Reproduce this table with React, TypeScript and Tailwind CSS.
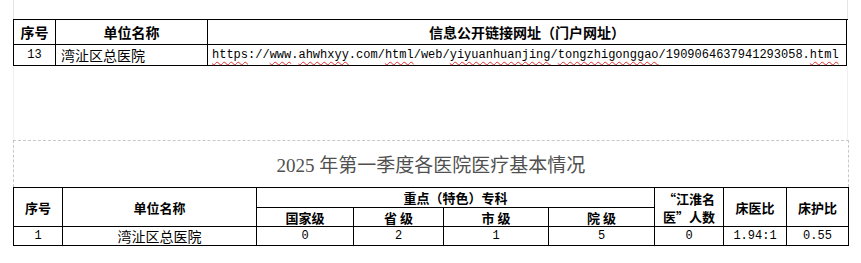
import React from "react";

const cjk = "font-['Noto_Sans_CJK_SC',sans-serif]";
const mono = "font-['Liberation_Mono','Noto_Sans_CJK_SC',monospace]";

function W({ children }: { children: React.ReactNode }) {
  return <span className="underline decoration-wavy decoration-[#e03030] decoration-1 underline-offset-[3px]">{children}</span>;
}

export default function App() {
  const h = `${cjk} font-bold text-black flex items-center justify-center border-r border-b border-black leading-none`;
  const hb = `${cjk} font-bold text-[13px] text-black flex items-center justify-center border-r border-b border-black leading-none`;
  const d = `text-black flex items-center justify-center border-r border-b border-black leading-none`;
  return (
    <div lang="zh-CN" className="w-[861px] h-[263px] bg-white overflow-hidden pl-[13px]">
      <div className="w-[835px] h-[19px] border-l border-r border-[#e4e4e4]" />
      <div className="w-[835px] grid grid-cols-[42px_152px_639px] grid-rows-[25px_21px] border-l border-t border-black">
        <div className={`${h} text-[14px]`}>序号</div>
        <div className={`${h} text-[14px]`}>单位名称</div>
        <div className={`${h} text-[14px]`}>信息公开链接网址（门户网址）</div>
        <div className={`${d} ${mono} text-[12px]`}>13</div>
        <div className={`${d} ${cjk} text-[14px] !justify-start pl-[5px]`}>湾沚区总医院</div>
        <div className={`${d} ${mono} text-[12px] !justify-start pl-[4px] whitespace-nowrap`}>
          <W>https</W>://<W>www</W>.<W>ahwhxyy</W>.com/<W>html</W>/web/<W>yiyuanhuanjing</W>/<W>tongzhigonggao</W>/1909064637941293058.<W>html</W>
        </div>
      </div>
      <div className="w-[835px] h-[74px] border-l border-r border-[#f0f0f0]" />
      <div className="w-[836px] h-[47px] border-t border-l border-r border-dashed border-[#c8c8c8] flex items-center justify-center">
        <span className="font-['Liberation_Serif','Noto_Sans_CJK_SC',serif] text-[19px] text-[#505050] leading-none pt-[2px]">
          2025 年第一季度各医院医疗基本情况
        </span>
      </div>
      <div className="w-[836px] grid grid-cols-[49px_194px_97px_90px_105px_106px_69px_63px_62px] grid-rows-[20px_19px_19px] border-l border-t border-black">
        <div className={`${hb} row-span-2`}>序号</div>
        <div className={`${hb} row-span-2`}>单位名称</div>
        <div className={`${hb} col-span-4`}>重点（特色）专科</div>
        <div className={`${cjk} font-bold text-[13px] text-black row-span-2 flex flex-col items-center justify-center gap-[3px] border-r border-b border-black`}>
          <span className="block h-[15px] leading-[15px]">“江淮名</span>
          <span className="block h-[15px] leading-[15px]">医”人数</span>
        </div>
        <div className={`${hb} row-span-2`}>床医比</div>
        <div className={`${hb} row-span-2`}>床护比</div>
        <div className={hb}>国家级</div>
        <div className={`${hb} whitespace-pre`}>省 级</div>
        <div className={`${hb} whitespace-pre`}>市 级</div>
        <div className={`${hb} whitespace-pre`}>院 级</div>
        <div className={`${d} ${mono} text-[12px]`}>1</div>
        <div className={`${d} ${cjk} text-[14px]`}>湾沚区总医院</div>
        <div className={`${d} ${mono} text-[12px]`}>0</div>
        <div className={`${d} ${mono} text-[12px]`}>2</div>
        <div className={`${d} ${mono} text-[12px]`}>1</div>
        <div className={`${d} ${mono} text-[12px]`}>5</div>
        <div className={`${d} ${mono} text-[12px]`}>0</div>
        <div className={`${d} ${mono} text-[12px]`}>1.94:1</div>
        <div className={`${d} ${mono} text-[12px]`}>0.55</div>
      </div>
    </div>
  );
}
